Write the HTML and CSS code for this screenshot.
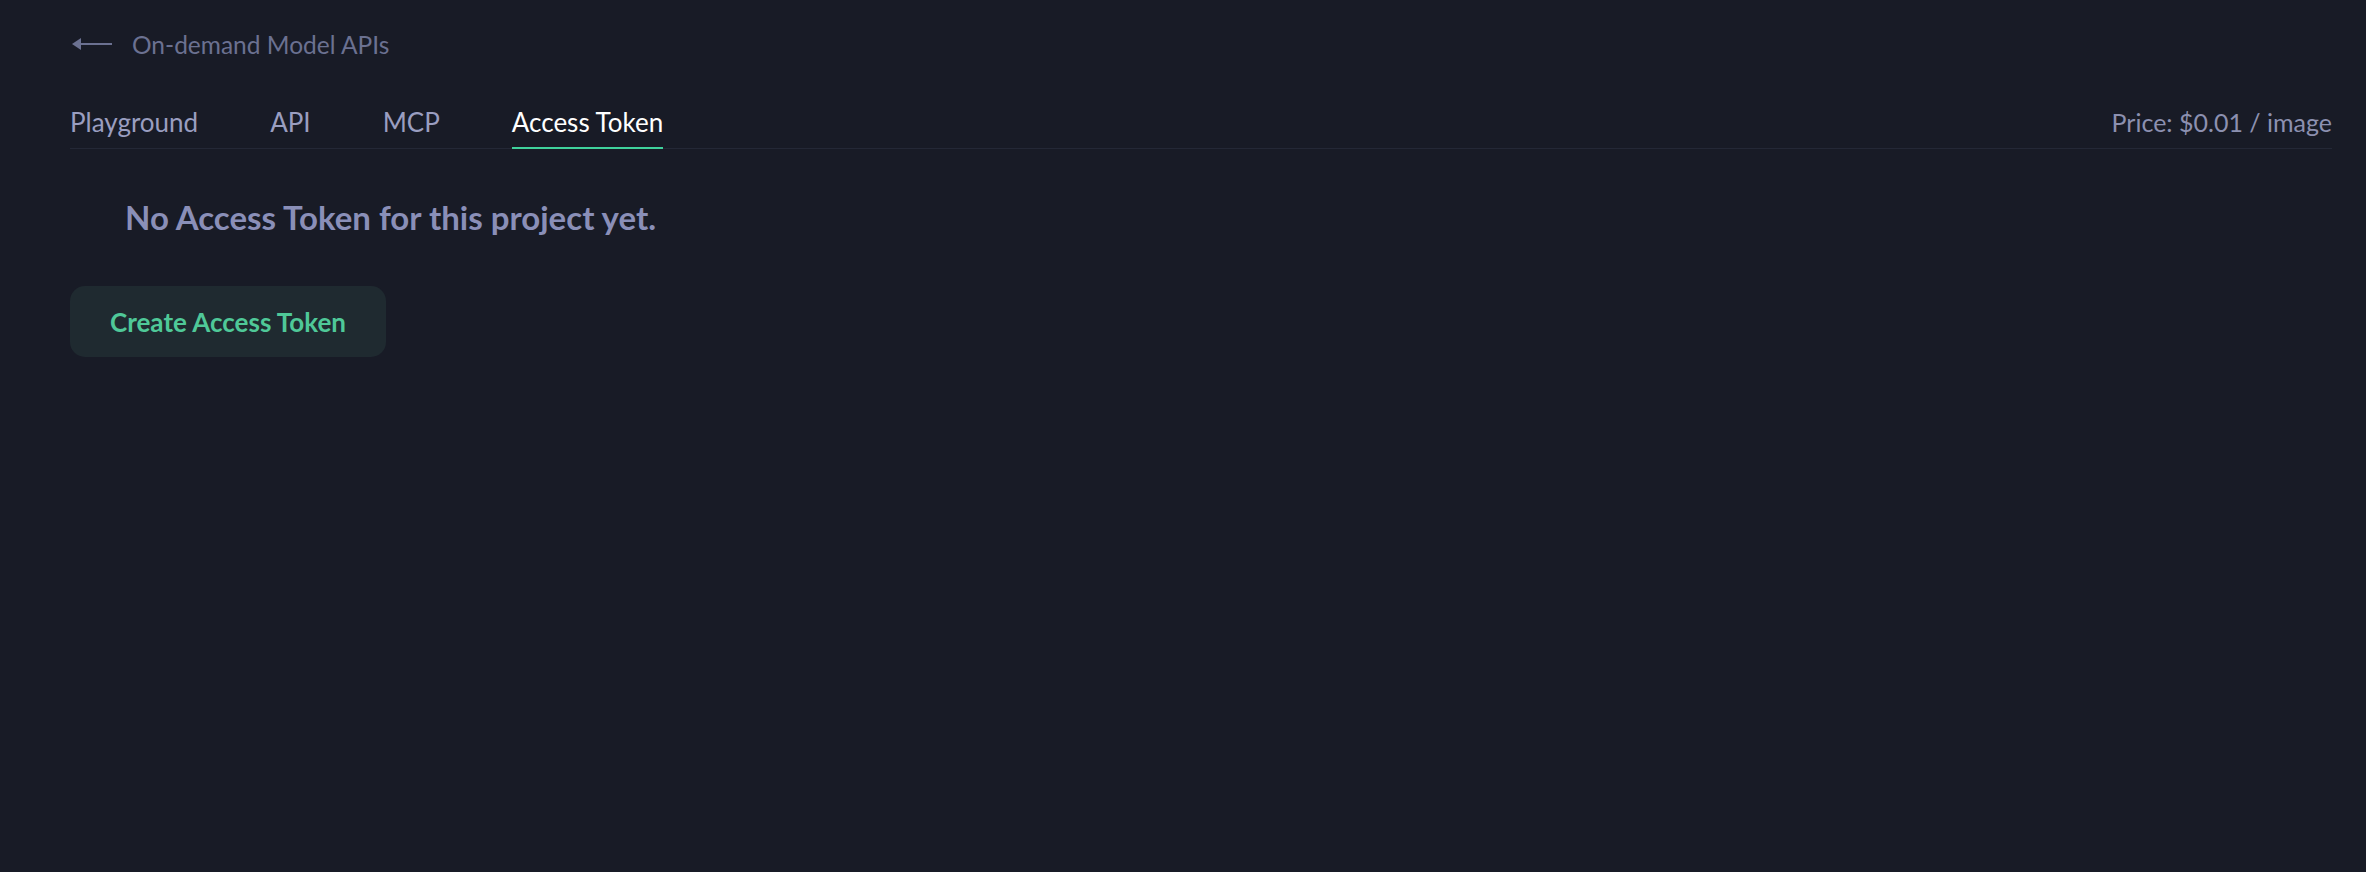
FILE: index.html
```html
<!DOCTYPE html>
<html lang="en">
<head>
    <meta charset="UTF-8">
    <meta name="viewport" content="width=device-width, initial-scale=1.0">
    <title>Access Token</title>
    <link rel="stylesheet" href="styles.css">
</head>
<body>
    <div class="page">
        <!-- Back link -->
        <a class="back-link" href="#">
            <svg class="back-arrow" width="40" height="14" viewBox="0 0 40 14">
                <path d="M0 7 L9 1 L9 13 Z" fill="#6b7191"/>
                <line x1="7" y1="7" x2="40" y2="7" stroke="#6b7191" stroke-width="2"/>
            </svg>
            <span>On-demand Model APIs</span>
        </a>

        <!-- Tabs -->
        <div class="tabs">
            <div class="tab-list">
                <a class="tab" href="#">Playground</a>
                <a class="tab" href="#">API</a>
                <a class="tab" href="#">MCP</a>
                <a class="tab active" href="#">Access Token</a>
            </div>
            <div class="price">Price: $0.01 / image</div>
        </div>

        <!-- Empty state -->
        <div class="empty">
            <h2 class="empty-title">No Access Token for this project yet.</h2>
            <button class="create-btn">Create Access Token</button>
        </div>
    </div>
</body>
</html>
```

FILE: styles.css
```css
body {
    margin: 0;
    background-color: #181b26;
    font-family: Lato, "Noto Sans", sans-serif;
    min-height: 872px;
}
.page {
    padding: 0 34px 0 70px;
}
a {
    text-decoration: none;
}

/* Back link */
.back-link {
    display: flex;
    align-items: center;
    gap: 20px;
    height: 88px;
    color: #6b7191;
    font-size: 24.5px;
    padding-left: 2px;
}
.back-arrow {
    display: block;
}

/* Tabs */
.tabs {
    display: flex;
    justify-content: space-between;
    align-items: flex-end;
    margin-top: 18px;
    border-bottom: 1px solid #242836;
}
.tab-list {
    display: flex;
    gap: 72px;
}
.tab {
    display: block;
    color: #9a9ec0;
    font-size: 26px;
    padding-bottom: 9px;
    border-bottom: 2px solid transparent;
    margin-bottom: -1px;
}
.tab.active {
    color: #ffffff;
    border-bottom-color: #3fd19c;
}
.price {
    color: #8c90b0;
    font-size: 25px;
    padding-bottom: 11px;
}

/* Empty state */
.empty {
    padding-top: 46px;
}
.empty-title {
    margin: 0 0 0 55px;
    color: #8a8fb8;
    font-size: 33px;
    font-weight: 700;
    line-height: 44px;
}
.create-btn {
    margin-top: 47px;
    height: 71px;
    padding: 0 40px;
    background-color: #1f2a30;
    color: #4fc898;
    border: none;
    border-radius: 15px;
    font-family: inherit;
    font-size: 26px;
    font-weight: 700;
    cursor: pointer;
}
```
